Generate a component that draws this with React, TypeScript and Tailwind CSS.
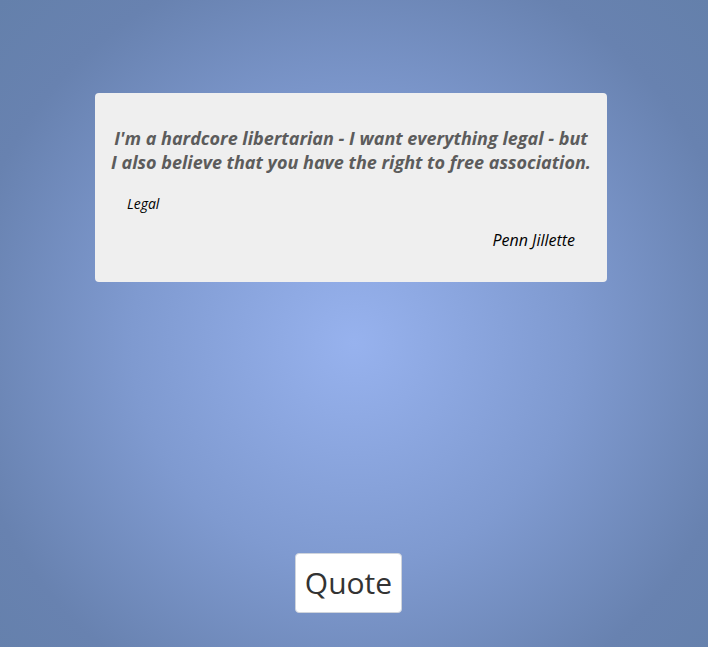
export default function App() {
  return (
    <div
      className="w-full h-[647px] flex flex-col items-center bg-[radial-gradient(circle_at_50%_53%,#97b2ee_0%,#7f9ad0_45%,#6882b0_80%,#6480ab_100%)]"
      style={{ fontFamily: '"Open Sans", "Noto Sans", sans-serif' }}
    >
      <div className="mt-[93px] mr-[6px] w-[512px] h-[189px] bg-[#efefef] rounded-[4px] flex flex-col px-[16px] pt-[34px]">
        <p className="text-center text-[18px] leading-[23.5px] font-bold italic text-[#5c5c5c] whitespace-nowrap">
          I'm a hardcore libertarian - I want everything legal - but
          <br />
          I also believe that you have the right to free association.
        </p>
        <div className="mt-[21px] pl-[16px] text-[14px] italic text-black leading-[18px]">Legal</div>
        <div className="mt-[17px] pr-[16px] text-right text-[16px] italic text-black leading-[20px]">Penn Jillette</div>
      </div>
      <div className="flex-1" />
      <button className="mb-[34px] mr-[11px] w-[107px] h-[60px] bg-white border border-[#cfd4dc] rounded-[4px] text-[30px] text-[#333] leading-none flex items-center justify-center pb-[1px]">
        Quote
      </button>
    </div>
  );
}
